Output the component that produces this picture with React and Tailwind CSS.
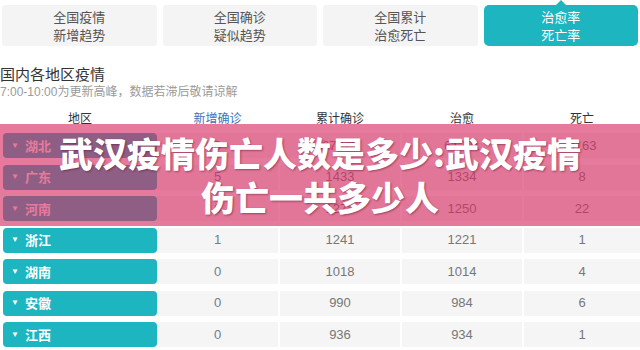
import React from 'react';

const tabs = [
  ['全国疫情', '新增趋势'],
  ['全国确诊', '疑似趋势'],
  ['全国累计', '治愈死亡'],
  ['治愈率', '死亡率'],
];

const rows = [
  { name: '湖北', add: '0', total: '67773', cured: '61201', dead: '3163' },
  { name: '广东', add: '5', total: '1433', cured: '1334', dead: '8' },
  { name: '河南', add: '0', total: '1274', cured: '1250', dead: '22' },
  { name: '浙江', add: '1', total: '1241', cured: '1221', dead: '1' },
  { name: '湖南', add: '0', total: '1018', cured: '1014', dead: '4' },
  { name: '安徽', add: '0', total: '990', cured: '984', dead: '6' },
  { name: '江西', add: '0', total: '936', cured: '934', dead: '1' },
];

const cjk = "font-['Noto_Sans_CJK_SC',sans-serif]";

export default function App() {
  return (
    <div className="relative w-[640px] h-[350px] overflow-hidden bg-white font-['Liberation_Sans','Noto_Sans_CJK_SC',sans-serif]">
      {/* 顶部切换 */}
      <div className="grid grid-cols-4 gap-[6px] px-[2px] pt-[5px]">
        {tabs.map((t, i) => {
          const active = i === 3;
          return (
            <div
              key={i}
              className={
                active
                  ? 'relative h-[41px] rounded-[5px] bg-[#1cb5c0] text-white flex flex-col items-center justify-center text-[13px] leading-[18px]'
                  : 'relative h-[41px] rounded-[3px] bg-[#f4f4f4] text-[#555] flex flex-col items-center justify-center text-[13px] leading-[18px]'
              }
            >
              {active && (
                <span className="absolute left-1/2 -top-[5px] -translate-x-1/2 w-0 h-0 border-x-[5px] border-x-transparent border-b-[5px] border-b-[#1cb5c0]" />
              )}
              <span className={cjk}>{t[0]}</span>
              <span className={cjk}>{t[1]}</span>
            </div>
          );
        })}
      </div>

      {/* 标题 */}
      <h2 className={`mt-[18px] text-[15px] leading-[20px] text-[#333] ${cjk}`}>国内各地区疫情</h2>
      <p className="text-[12px] leading-[16px] text-[#9a9a9a]">7:00-10:00为更新高峰，数据若滞后敬请谅解</p>

      {/* 表头 */}
      <div className="mt-[10px] flex pl-[3px] h-[18px] items-center text-[12px] text-[#333]">
        <div className="w-[154px] text-center">地区</div>
        <div className="grid flex-1 grid-cols-[121px_120px_120px_1fr] gap-x-[2px] text-center">
          <span className="text-[#3b72bb]">新增确诊</span>
          <span>累计确诊</span>
          <span>治愈</span>
          <span>死亡</span>
        </div>
      </div>

      {/* 数据行 */}
      <div className="mt-[5px] flex flex-col gap-y-[6.5px] pl-[3px]">
        {rows.map((r) => (
          <div key={r.name} className="flex h-[25px]">
            <div className="w-[154px] flex items-center rounded-[4px] bg-[#1cb5c0] pl-[8px] text-white">
              <span className="text-[8px] leading-none mr-[6px]">▼</span>
              <span className={`text-[13px] font-bold ${cjk}`}>{r.name}</span>
            </div>
            <div className="grid flex-1 grid-cols-[121px_120px_120px_1fr] gap-x-[2px] text-[13px] text-[#777]">
              <div className="flex items-center justify-center bg-[#f5f5f5] text-[#6e7d92]">{r.add}</div>
              <div className="flex items-center justify-center bg-[#f5f5f5]">{r.total}</div>
              <div className="flex items-center justify-center bg-[#f5f5f5]">{r.cured}</div>
              <div className="flex items-center justify-center bg-[#f5f5f5]">{r.dead}</div>
            </div>
          </div>
        ))}
      </div>

      {/* 覆盖标题条 */}
      <div className="absolute left-0 right-0 top-[124px] h-[102px] bg-[rgba(214,40,96,0.62)] flex flex-col items-center justify-center">
        <p className={`text-[34px] leading-[44px] font-black text-white [text-shadow:1px_1px_2px_rgba(80,0,30,0.45)] ${cjk}`}>
          武汉疫情伤亡人数是多少:武汉疫情
        </p>
        <p className={`text-[34px] leading-[44px] font-black text-white [text-shadow:1px_1px_2px_rgba(80,0,30,0.45)] ${cjk}`}>
          伤亡一共多少人
        </p>
      </div>
    </div>
  );
}
